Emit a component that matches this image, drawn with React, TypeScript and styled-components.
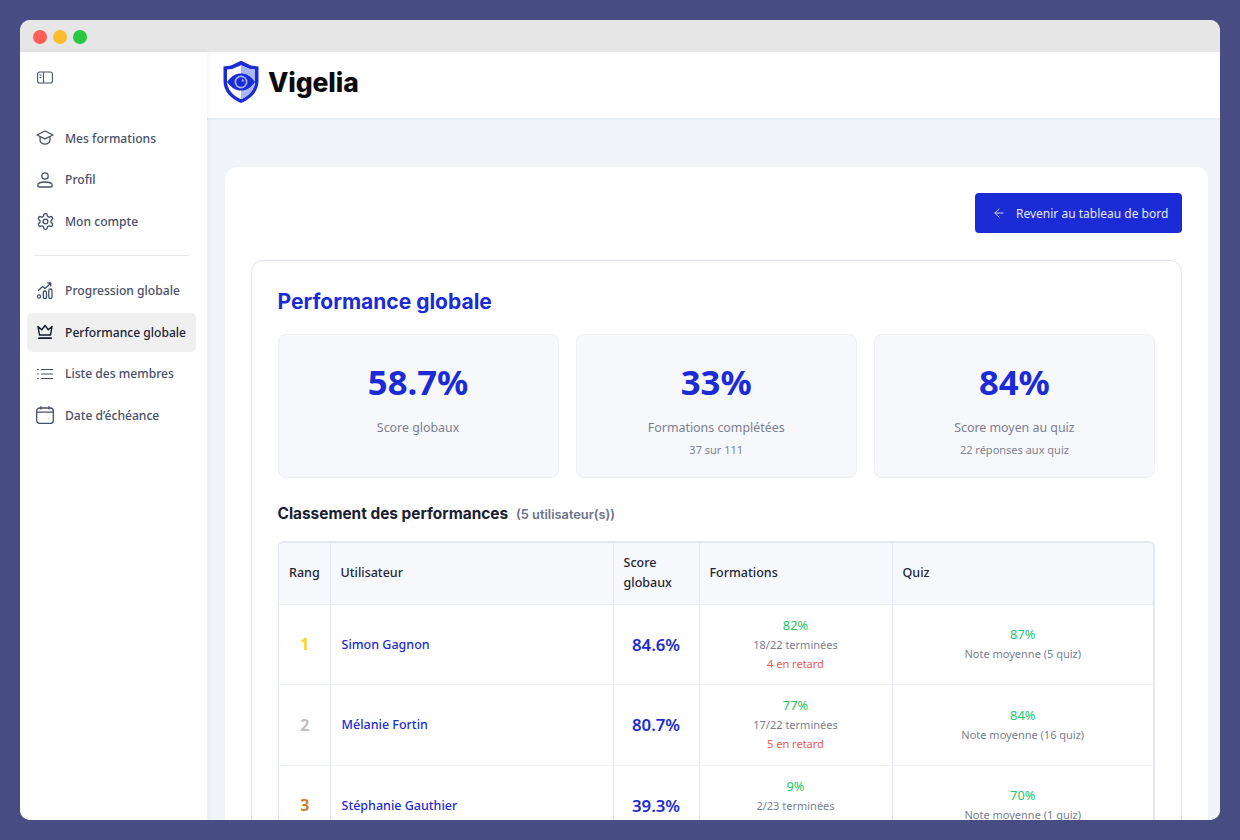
import React from 'react'
import styled, { createGlobalStyle } from 'styled-components'
import { ArrowLeft } from 'lucide-react'

const GlobalStyle = createGlobalStyle`
  html, body {
    margin: 0;
    padding: 0;
    height: 100%;
    background: #474d82;
  }
  * {
    box-sizing: border-box;
  }
`

const Page = styled.div`
  width: 1240px;
  height: 840px;
  padding: 20px;
  overflow: hidden;
  background: #474d82;
  font-family: "Noto Sans", sans-serif;
`

const AppWindow = styled.div`
  width: 1200px;
  height: 800px;
  border-radius: 10px;
  overflow: hidden;
  display: flex;
  flex-direction: column;
  background: #fff;
`

const TitleBar = styled.div`
  height: 32px;
  flex: none;
  display: flex;
  align-items: center;
  gap: 6px;
  padding: 2px 0 0 13px;
  background: #e6e6e6;
`

const Dot = styled.span<{ $color: string }>`
  width: 14px;
  height: 14px;
  border-radius: 50%;
  background: ${p => p.$color};
`

const Body = styled.div`
  flex: 1;
  min-height: 0;
  display: flex;
`

const Sidebar = styled.aside`
  width: 187px;
  flex: none;
  padding: 18px 11px 0 7px;
  background: #fff;
  box-shadow: 1px 0 6px rgba(30, 41, 80, 0.07);
  position: relative;
  z-index: 1;
`

const ToggleButton = styled.div`
  height: 15px;
  margin: 0 0 34px 10px;
  color: #475569;
  display: flex;
  align-items: center;
`

const NavGroup = styled.nav`
  display: flex;
  flex-direction: column;
  gap: 3px;
`

const NavItem = styled.div<{ $active?: boolean }>`
  height: 38.5px;
  display: flex;
  align-items: center;
  gap: 10px;
  padding-left: 8px;
  border-radius: 5px;
  font-size: 12.1px;
  font-weight: 500;
  white-space: nowrap;
  color: ${p => (p.$active ? '#1c2333' : '#475069')};
  background: ${p => (p.$active ? '#f0f0f0' : 'transparent')};
`

const IconSlot = styled.span`
  width: 20px;
  height: 20px;
  flex: none;
  display: flex;
  align-items: center;
  justify-content: center;
`

const NavDivider = styled.div`
  height: 1px;
  margin: 14px 7px 16px 7px;
  background: #e7e8ea;
`

const Content = styled.div`
  flex: 1;
  min-width: 0;
  display: flex;
  flex-direction: column;
  background: #f1f5fa;
`

const Header = styled.header`
  height: 68px;
  flex: none;
  display: flex;
  align-items: center;
  gap: 8px;
  padding: 0 0 6px 15px;
  background: #fff;
  border-bottom: 2px solid #e8ecf4;
`

const Wordmark = styled.span`
  font-family: Inter, sans-serif;
  font-size: 26.5px;
  font-weight: 800;
  letter-spacing: -0.1px;
  color: #0b0b0f;
`

const Main = styled.main`
  flex: 1;
  min-height: 0;
  padding: 47px 12px 0 18px;
  overflow: hidden;
`

const Card = styled.section`
  background: #fff;
  border-radius: 12px;
  padding: 26px 26px 0;
  height: 800px;
`

const Actions = styled.div`
  display: flex;
  justify-content: flex-end;
  margin-bottom: 27px;
`

const BackButton = styled.button`
  width: 207px;
  height: 40px;
  border: 0;
  border-radius: 4px;
  background: #1b2bd6;
  color: #e6e9ff;
  display: flex;
  align-items: center;
  gap: 10px;
  padding: 0 0 0 17px;
  font-family: "Noto Sans", sans-serif;
  font-size: 12px;
  white-space: nowrap;
`

const Panel = styled.div`
  border: 1px solid #dfe3ee;
  border-radius: 12px;
  padding: 25px 26px 0 25.5px;
  height: 700px;
`

const Title = styled.h1`
  margin: 0 0 17px;
  font-family: Inter, sans-serif;
  font-size: 21px;
  line-height: 31px;
  font-weight: 700;
  color: #1b2bd6;
`

const StatGrid = styled.div`
  display: grid;
  grid-template-columns: repeat(3, 1fr);
  gap: 17px;
`

const StatCard = styled.div`
  height: 143.5px;
  padding-top: 23.5px;
  display: flex;
  flex-direction: column;
  align-items: center;
  background: #f7f8fb;
  border: 1px solid #eef0f4;
  border-radius: 8px;
`

const StatValue = styled.div`
  font-size: 34.7px;
  line-height: 46px;
  font-weight: 700;
  color: #1b2bd6;
`

const StatLabel = styled.div`
  margin-top: 14.5px;
  font-size: 12.4px;
  line-height: 18px;
  color: #7a8090;
`

const StatHint = styled.div`
  margin-top: 5px;
  font-size: 11px;
  line-height: 15px;
  color: #7a8090;
`

const SectionHead = styled.div`
  display: flex;
  align-items: baseline;
  gap: 8px;
  margin: 26.5px 0 15.5px;
  font-family: Inter, sans-serif;
  line-height: 20px;
`

const SectionTitle = styled.h2`
  margin: 0;
  font-size: 15.4px;
  font-weight: 700;
  color: #1a2032;
`

const SectionCount = styled.span`
  font-size: 12.8px;
  font-weight: 600;
  color: #6c7386;
`

const TableWrap = styled.div`
  margin-left: 0.5px;
  border: 1px solid #e2e7f0;
  border-width: 2px 2px 0 2px;
  border-left-width: 1px;
  border-radius: 6px 6px 0 0;
  overflow: hidden;
`

const Table = styled.table`
  width: 100%;
  table-layout: fixed;
  border-collapse: collapse;
`

const HeadCell = styled.th`
  height: 61.5px;
  padding: 0 10px;
  text-align: left;
  font-size: 12.5px;
  line-height: 20px;
  font-weight: 500;
  color: #1f2638;
  background: #f7f8fb;
  border-right: 1px solid #e2e7f0;
  border-bottom: 1px solid #ebedf2;
  &:last-child {
    border-right: 0;
  }
`

const Cell = styled.td`
  height: 80.6px;
  padding: 0 10px;
  border-right: 1px solid #e2e7f0;
  border-bottom: 1px solid #eff1f5;
  text-align: center;
  &:last-child {
    border-right: 0;
  }
`

const RankCell = styled(Cell)`
  padding-left: 11px;
`

const NameCell = styled(Cell)`
  padding-left: 11px;
  text-align: left;
  font-size: 12.5px;
  font-weight: 500;
  color: #1b2bd6;
`

const Rank = styled.span<{ $color: string }>`
  font-size: 16px;
  font-weight: 700;
  color: ${p => p.$color};
`

const Score = styled.span`
  font-size: 16.8px;
  font-weight: 600;
  color: #1b2bd6;
`

const Percent = styled.div`
  font-size: 12.8px;
  line-height: 18px;
  color: #22c768;
`

const Detail = styled.div`
  margin-top: 2px;
  font-size: 11px;
  line-height: 18px;
  color: #7a8090;
`

const Late = styled.div`
  font-size: 11px;
  line-height: 19px;
  color: #ef5b50;
`

const PanelIcon = () => (
  <svg width="16" height="13" viewBox="0 0 16 13" fill="none" stroke="currentColor" strokeWidth="1.1">
    <rect x="0.6" y="1" width="14.8" height="11" rx="2" />
    <path d="M6.5 1v11M2.5 4h2M2.5 6.5h2" />
  </svg>
)

const CapIcon = () => (
  <svg width="18" height="18" viewBox="0 0 18 18" fill="none" stroke="currentColor" strokeWidth="1.3" strokeLinejoin="round">
    <path d="M9 2 17 6 9 9.900 1 6 9 2Z" />
    <path d="M4.100 8v3.400c0 2 2.200 3.800 4.900 3.800s4.900-1.800 4.900-3.800V8" />
  </svg>
)

const UserIcon = () => (
  <svg width="18" height="18" viewBox="0 0 18 18" fill="none" stroke="currentColor" strokeWidth="1.3">
    <circle cx="9" cy="5" r="3.200" />
    <path d="M1.800 14.400c0-2 2.700-3.400 7.200-3.400s7.200 1.400 7.200 3.400c0 1-.6 1.600-1.500 1.600H3.300c-.9 0-1.500-.6-1.500-1.600Z" />
  </svg>
)

const GearIcon = () => (
  <svg width="19" height="19" viewBox="0 0 24 24" fill="none" stroke="currentColor" strokeWidth="1.7" strokeLinejoin="round">
    <path d="M12.220 2h-.44a2 2 0 0 0-2 2v.18a2 2 0 0 1-1 1.730l-.43.250a2 2 0 0 1-2 0l-.15-.080a2 2 0 0 0-2.730.730l-.22.380a2 2 0 0 0 .730 2.730l.15.100a2 2 0 0 1 1 1.720v.510a2 2 0 0 1-1 1.740l-.15.090a2 2 0 0 0-.730 2.730l.22.380a2 2 0 0 0 2.730.730l.15-.080a2 2 0 0 1 2 0l.43.250a2 2 0 0 1 1 1.730V20a2 2 0 0 0 2 2h.44a2 2 0 0 0 2-2v-.18a2 2 0 0 1 1-1.730l.43-.250a2 2 0 0 1 2 0l.15.080a2 2 0 0 0 2.730-.730l.22-.390a2 2 0 0 0-.730-2.730l-.15-.080a2 2 0 0 1-1-1.740v-.500a2 2 0 0 1 1-1.740l.15-.090a2 2 0 0 0 .730-2.730l-.22-.380a2 2 0 0 0-2.730-.730l-.15.080a2 2 0 0 1-2 0l-.43-.250a2 2 0 0 1-1-1.730V4a2 2 0 0 0-2-2Z" />
    <circle cx="12" cy="12" r="3" />
  </svg>
)

const ChartIcon = () => (
  <svg width="18" height="18" viewBox="0 0 18 18" fill="none" stroke="currentColor" strokeWidth="1.3" strokeLinejoin="round" strokeLinecap="round">
    <path d="M2.500 8.500 6.500 4.500l2.500 2L14.500 1.500M11.800 1H14.800V4" />
    <circle cx="3" cy="14.500" r="1.600" />
    <rect x="7.300" y="9" width="3.200" height="7.500" rx="1.600" />
    <rect x="12.800" y="7" width="3.200" height="9.500" rx="1.600" />
  </svg>
)

const CrownIcon = () => (
  <svg width="18" height="18" viewBox="0 0 18 18" fill="none" stroke="#111827" strokeWidth="1.4" strokeLinejoin="round" strokeLinecap="round">
    <path d="M2 3.500 3.500 12H14.500L16 3.500 12.300 6.700 9 2.500 5.700 6.700 2 3.500Z" />
    <path d="M3 15.200H15" strokeWidth="1.800" />
  </svg>
)

const ListIcon = () => (
  <svg width="18" height="18" viewBox="0 0 18 18" fill="none" stroke="currentColor" strokeWidth="1.2" strokeLinecap="round">
    <path d="M5.500 4.500H16.500M5.500 9H16.500M5.500 13.500H16.500M1.500 4.500h.8M1.500 9h.8M1.500 13.500h.8" />
  </svg>
)

const CalendarIcon = () => (
  <svg width="18" height="18" viewBox="0 0 18 18" fill="none" stroke="currentColor" strokeWidth="1.3" strokeLinecap="round">
    <rect x="0.7" y="2" width="16.600" height="15.400" rx="3" />
    <path d="M0.700 6.200H17.300M5 0.700V3M13 0.700V3" />
  </svg>
)

const ShieldLogo = () => (
  <svg width="38" height="44" viewBox="0 0 38 44">
    <path d="M19 0.800 29 5.500 36.500 6.500V21c0 10-7 17.500-17.500 22C8.500 38.500 1.500 31 1.500 21V6.500L9 5.500 19 0.800Z" fill="#1b2bd6" />
    <path d="M19 5.200 27.800 9 33 9.600V21c0 8.400-5.600 14.500-14 18.200C10.600 35.500 5 29.400 5 21V9.600L10.200 9 19 5.200Z" fill="#fff" />
    <path d="M19 5.200 27.800 9 33 9.600V21c0 8.400-5.600 14.500-14 18.200V5.200Z" fill="#a8b6f4" />
    <path d="M5 22C9.200 16 13.800 13.500 19 13.500S28.800 16 33 22c-4.200 6-8.800 8.500-14 8.500S9.200 28 5 22Z" fill="#1b2bd6" />
    <circle cx="19" cy="22" r="6.500" fill="#a8b6f4" />
    <circle cx="19" cy="22" r="4.800" fill="#1b2bd6" />
    <path d="M19.800 18.800a3.300 3.300 0 0 1 2.400 2.600h-2.400Z" fill="#a8b6f4" />
  </svg>
)

const navTop = [
  { label: 'Mes formations', icon: <CapIcon /> },
  { label: 'Profil', icon: <UserIcon /> },
  { label: 'Mon compte', icon: <GearIcon /> },
]

const navBottom = [
  { label: 'Progression globale', icon: <ChartIcon /> },
  { label: 'Performance globale', icon: <CrownIcon />, active: true },
  { label: 'Liste des membres', icon: <ListIcon /> },
  { label: "Date d’échéance", icon: <CalendarIcon /> },
]

const rows = [
  { rank: 1, color: '#ffd21f', name: 'Simon Gagnon', score: '84.6%', pct: '82%', done: '18/22 terminées', late: '4 en retard', quiz: '87%', note: 'Note moyenne (5 quiz)' },
  { rank: 2, color: '#c0c0c0', name: 'Mélanie Fortin', score: '80.7%', pct: '77%', done: '17/22 terminées', late: '5 en retard', quiz: '84%', note: 'Note moyenne (16 quiz)' },
  { rank: 3, color: '#cd7f32', name: 'Stéphanie Gauthier', score: '39.3%', pct: '9%', done: '2/23 terminées', late: '10 en retard', quiz: '70%', note: 'Note moyenne (1 quiz)' },
]

function App() {
  return (
    <Page>
      <GlobalStyle />
      <AppWindow>
        <TitleBar>
          <Dot $color="#ff5f57" />
          <Dot $color="#febc2e" />
          <Dot $color="#28c840" />
        </TitleBar>
        <Body>
          <Sidebar>
            <ToggleButton><PanelIcon /></ToggleButton>
            <NavGroup>
              {navTop.map(item => (
                <NavItem key={item.label}>
                  <IconSlot>{item.icon}</IconSlot>
                  {item.label}
                </NavItem>
              ))}
            </NavGroup>
            <NavDivider />
            <NavGroup>
              {navBottom.map(item => (
                <NavItem key={item.label} $active={item.active}>
                  <IconSlot>{item.icon}</IconSlot>
                  {item.label}
                </NavItem>
              ))}
            </NavGroup>
          </Sidebar>
          <Content>
            <Header>
              <ShieldLogo />
              <Wordmark>Vigelia</Wordmark>
            </Header>
            <Main>
              <Card>
                <Actions>
                  <BackButton>
                    <ArrowLeft size={14} strokeWidth={1.5} />
                    Revenir au tableau de bord
                  </BackButton>
                </Actions>
                <Panel>
                  <Title>Performance globale</Title>
                  <StatGrid>
                    <StatCard>
                      <StatValue>58.7%</StatValue>
                      <StatLabel>Score globaux</StatLabel>
                    </StatCard>
                    <StatCard>
                      <StatValue>33%</StatValue>
                      <StatLabel>Formations complétées</StatLabel>
                      <StatHint>37 sur 111</StatHint>
                    </StatCard>
                    <StatCard>
                      <StatValue>84%</StatValue>
                      <StatLabel>Score moyen au quiz</StatLabel>
                      <StatHint>22 réponses aux quiz</StatHint>
                    </StatCard>
                  </StatGrid>
                  <SectionHead>
                    <SectionTitle>Classement des performances</SectionTitle>
                    <SectionCount>(5 utilisateur(s))</SectionCount>
                  </SectionHead>
                  <TableWrap>
                    <Table>
                      <colgroup>
                        <col width="51" />
                        <col width="283" />
                        <col width="86" />
                        <col width="193" />
                        <col />
                      </colgroup>
                      <thead>
                        <tr>
                          <HeadCell>Rang</HeadCell>
                          <HeadCell>Utilisateur</HeadCell>
                          <HeadCell>Score globaux</HeadCell>
                          <HeadCell>Formations</HeadCell>
                          <HeadCell>Quiz</HeadCell>
                        </tr>
                      </thead>
                      <tbody>
                        {rows.map(row => (
                          <tr key={row.rank}>
                            <RankCell><Rank $color={row.color}>{row.rank}</Rank></RankCell>
                            <NameCell>{row.name}</NameCell>
                            <Cell><Score>{row.score}</Score></Cell>
                            <Cell>
                              <Percent>{row.pct}</Percent>
                              <Detail>{row.done}</Detail>
                              <Late>{row.late}</Late>
                            </Cell>
                            <Cell>
                              <Percent>{row.quiz}</Percent>
                              <Detail>{row.note}</Detail>
                            </Cell>
                          </tr>
                        ))}
                      </tbody>
                    </Table>
                  </TableWrap>
                </Panel>
              </Card>
            </Main>
          </Content>
        </Body>
      </AppWindow>
    </Page>
  )
}

export default App
